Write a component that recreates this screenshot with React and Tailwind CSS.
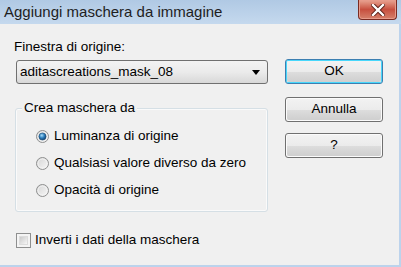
import React from 'react';

const font = { fontFamily: '"Liberation Sans", Arial, sans-serif' };

function Radio({ checked }) {
  return (
    <svg width="13" height="13" viewBox="0 0 13 13" className="shrink-0">
      <defs>
        <linearGradient id="rb" x1="0" y1="0" x2="1" y2="1">
          <stop offset="0" stopColor="#d4d4d4" />
          <stop offset="1" stopColor="#f8f8f8" />
        </linearGradient>
        <radialGradient id="rd" cx="0.4" cy="0.35" r="0.7">
          <stop offset="0" stopColor="#a8dcf8" />
          <stop offset="0.5" stopColor="#2d7fbd" />
          <stop offset="1" stopColor="#0e3a66" />
        </radialGradient>
      </defs>
      <circle cx="6.5" cy="6.5" r="6" fill="url(#rb)" stroke="#8e8f8f" />
      <circle cx="6.5" cy="6.5" r="4.5" fill="none" stroke="#f4f4f4" strokeWidth="0.8" />
      {checked && <circle cx="6.5" cy="6.5" r="3.6" fill="url(#rd)" stroke="#1c4c74" strokeWidth="0.6" />}
    </svg>
  );
}

function Button({ children, primary }) {
  return (
    <div
      className={`relative h-[25px] w-[98px] rounded-[3px] border flex items-center justify-center text-[13.5px] text-black ${
        primary ? 'border-[#3c7fb1] shadow-[inset_0_0_0_1px_#48d7fb]' : 'border-[#707070] shadow-[inset_0_0_0_1px_#fbfbfb]'
      }`}
    >
      <div className="absolute inset-[1px] rounded-[2px] flex flex-col overflow-hidden">
        <div className="flex-1 bg-gradient-to-b from-[#f2f2f2] to-[#ebebeb]" />
        <div className="flex-1 bg-gradient-to-b from-[#dddddd] to-[#cfcfcf]" />
      </div>
      <span className="relative">{children}</span>
    </div>
  );
}

export default function App() {
  return (
    <div className="w-[401px] h-[267px] flex flex-col overflow-hidden bg-[#f0f0f0]" style={font}>
      {/* Title bar */}
      <div className="h-[24px] shrink-0 flex items-start bg-gradient-to-b from-[#b0c9e4] to-[#c5d9ee]">
        <div className="pl-[4px] pt-[2px] text-[15px] text-[#1e1e1e] leading-[20px] flex-1">
          Aggiungi maschera da immagine
        </div>
        <div className="mr-[4px] w-[39px] h-[20px] rounded-b-[4px] border border-t-0 border-[#7a2b22] flex items-center justify-center bg-gradient-to-b from-[#e8a493] via-[#c74f3f] to-[#d5806b] shadow-[inset_0_0_0_1px_#e79b8b]">
          <svg width="14" height="12" viewBox="0 0 14 12">
            <path d="M2 1 L12 11 M12 1 L2 11" stroke="#5a1f17" strokeWidth="4.2" strokeLinecap="square" />
            <path d="M2 1 L12 11 M12 1 L2 11" stroke="#ffffff" strokeWidth="2.4" strokeLinecap="square" />
          </svg>
        </div>
      </div>

      {/* Body */}
      <div className="flex-1 flex border-r-2 border-b-2 border-[#bcd3ec] text-black text-[13.5px]">
        <div className="ml-[14px] w-[256px] flex flex-col">
          <div className="mt-[15px] leading-[16px]">Finestra di origine:</div>
          <div className="mt-[5px] ml-[2px] h-[24px] w-[252px] rounded-[3px] border border-[#707070] bg-gradient-to-b from-[#f3f3f3] via-[#ebebeb] to-[#d8d8d8] flex items-center pl-[3px] pr-[7px]">
            <span className="flex-1 leading-[16px]">aditascreations_mask_08</span>
            <svg width="8" height="5" viewBox="0 0 8 5">
              <path d="M0 0 L8 0 L4 5 Z" fill="#000" />
            </svg>
          </div>

          {/* Group box */}
          <div className="mt-[24px] ml-[1px] h-[104px] w-[253px] rounded-[3px] border border-[#d5dfe5] shadow-[inset_0_0_0_1px_#fafafa] relative">
            <div className="absolute -top-[9px] left-[6px] px-[2px] bg-[#f0f0f0] leading-[16px]">Crea maschera da</div>
            <div className="flex flex-col pl-[20px] pt-[20px] gap-[13px]">
              <div className="flex items-center gap-[5px] h-[14px]">
                <Radio checked />
                <span className="leading-[16px]">Luminanza di origine</span>
              </div>
              <div className="flex items-center gap-[5px] h-[14px]">
                <Radio />
                <span className="leading-[16px]">Qualsiasi valore diverso da zero</span>
              </div>
              <div className="flex items-center gap-[5px] h-[14px]">
                <Radio />
                <span className="leading-[16px]">Opacità di origine</span>
              </div>
            </div>
          </div>

          <div className="mt-[20px] ml-[2px] flex items-center gap-[4px]">
            <div className="w-[15px] h-[15px] border border-[#8e8f8f] p-[2px] bg-[#f4f4f4]">
              <div className="w-full h-full bg-gradient-to-br from-[#cbcbcb] to-[#f6f6f6] border border-[#dcdcdc]" />
            </div>
            <span className="leading-[16px]">Inverti i dati della maschera</span>
          </div>
        </div>

        <div className="ml-[15px] flex flex-col">
          <div className="mt-[35px]">
            <Button primary>OK</Button>
          </div>
          <div className="mt-[13px]">
            <Button>Annulla</Button>
          </div>
          <div className="mt-[11px]">
            <Button>?</Button>
          </div>
        </div>
      </div>
    </div>
  );
}
